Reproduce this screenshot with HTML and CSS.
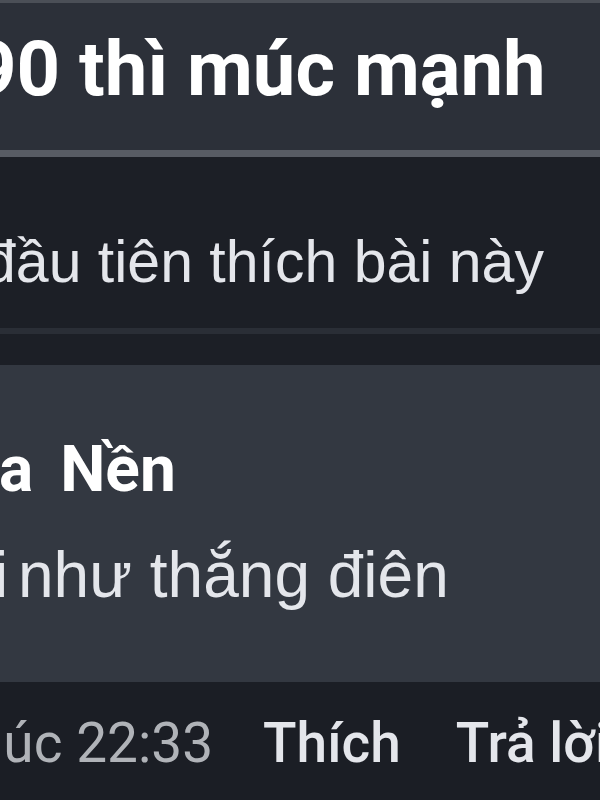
FILE: index.html
```html
<!DOCTYPE html>
<html lang="vi">
<head>
  <meta charset="UTF-8" />
  <meta name="viewport" content="width=device-width, initial-scale=1.0" />
  <title>Bình luận</title>
  <link rel="stylesheet" href="styles.css">
</head>
<body>
  <div class="page">
    <!-- Post title -->
    <div class="post-head">
      <h1 class="post-title">90 thì múc mạnh</h1>
    </div>

    <!-- Likes line -->
    <div class="likes">
      <p class="likes-text">đầu tiên thích bài này</p>
    </div>
    <div class="gap"></div>

    <!-- Comment bubble -->
    <div class="comment">
      <div class="comment-author">a Nền</div>
      <div class="comment-body"><span class="cut">i </span>như thắng điên</div>
    </div>

    <!-- Comment actions -->
    <div class="actions">
      <span class="time">lúc 22:33</span>
      <span class="action">Thích</span>
      <span class="action reply">Trả lời</span>
    </div>
  </div>
</body>
</html>
```

FILE: styles.css
```css
* {
  box-sizing: border-box;
}
html, body {
  margin: 0;
  padding: 0;
}
body {
  width: 600px;
  height: 800px;
  overflow: hidden;
  background: #1c1f26;
  color: #e4e6eb;
  font-family: 'Liberation Sans', Arial, sans-serif;
}
.page {
  display: flex;
  flex-direction: column;
  height: 100%;
}
/* Title panel */
.post-head {
  height: 157px;
  padding-top: 28px;
  background: #2c3039;
  border-top: 3px solid #4b4f57;
  border-bottom: 7px solid #585c64;
  white-space: nowrap;
}
.post-title {
  margin: 0 0 0 -27px;
  font-family: Roboto, sans-serif;
  font-weight: 700;
  font-size: 76px;
  line-height: 1;
  color: #fff;
}
/* Likes line */
.likes {
  height: 177px;
  padding-top: 76px;
  background: #1c1f26;
  border-bottom: 6px solid #2a2e36;
  white-space: nowrap;
}
.likes-text {
  margin: 0 0 0 -17px;
  font-size: 59px;
  line-height: 1;
  color: #e4e6eb;
}
.gap {
  height: 31px;
  background: #1c1f26;
}
/* Comment bubble */
.comment {
  height: 317px;
  padding-top: 73px;
  background: #333841;
  white-space: nowrap;
}
.comment-author {
  margin-left: -1px;
  font-family: Roboto, sans-serif;
  font-weight: 700;
  font-size: 64px;
  line-height: 1;
  word-spacing: 11px;
  color: #fff;
}
.comment-body {
  margin: 41px 0 0 -6px;
  font-size: 64px;
  line-height: 1;
  color: #e4e6eb;
}
.cut {
  word-spacing: -8px;
}
/* Actions row */
.actions {
  flex: 1;
  display: flex;
  gap: 50px;
  padding-top: 34px;
  margin-left: -10px;
  background: #1b1e25;
  white-space: nowrap;
  font-family: Roboto, sans-serif;
  font-size: 55px;
  line-height: 1;
}
.time {
  color: #b0b3b8;
}
.action {
  font-weight: 500;
  color: #e4e6eb;
}
.reply {
  margin-left: 5px;
}
```
